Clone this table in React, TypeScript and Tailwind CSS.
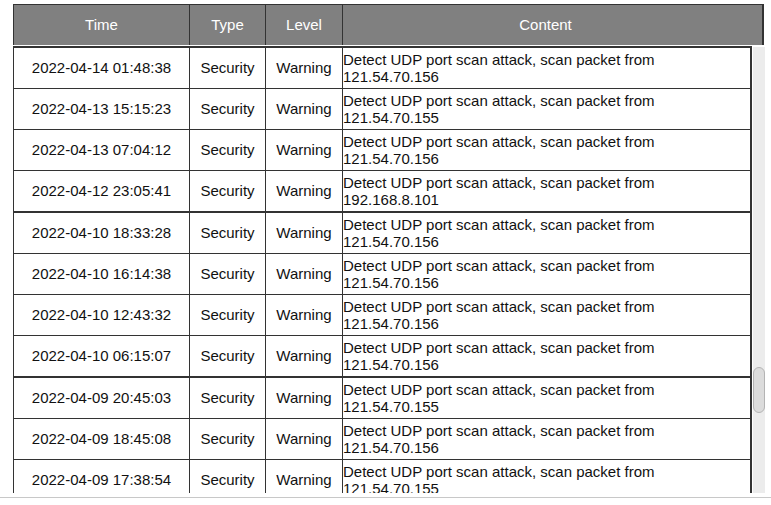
import React from 'react';

interface LogRow {
  time: string;
  type: string;
  level: string;
  content: string;
}

const rows: LogRow[] = [
  { time: '2022-04-14 01:48:38', type: 'Security', level: 'Warning', content: 'Detect UDP port scan attack, scan packet from 121.54.70.156' },
  { time: '2022-04-13 15:15:23', type: 'Security', level: 'Warning', content: 'Detect UDP port scan attack, scan packet from 121.54.70.155' },
  { time: '2022-04-13 07:04:12', type: 'Security', level: 'Warning', content: 'Detect UDP port scan attack, scan packet from 121.54.70.156' },
  { time: '2022-04-12 23:05:41', type: 'Security', level: 'Warning', content: 'Detect UDP port scan attack, scan packet from 192.168.8.101' },
  { time: '2022-04-10 18:33:28', type: 'Security', level: 'Warning', content: 'Detect UDP port scan attack, scan packet from 121.54.70.156' },
  { time: '2022-04-10 16:14:38', type: 'Security', level: 'Warning', content: 'Detect UDP port scan attack, scan packet from 121.54.70.156' },
  { time: '2022-04-10 12:43:32', type: 'Security', level: 'Warning', content: 'Detect UDP port scan attack, scan packet from 121.54.70.156' },
  { time: '2022-04-10 06:15:07', type: 'Security', level: 'Warning', content: 'Detect UDP port scan attack, scan packet from 121.54.70.156' },
  { time: '2022-04-09 20:45:03', type: 'Security', level: 'Warning', content: 'Detect UDP port scan attack, scan packet from 121.54.70.155' },
  { time: '2022-04-09 18:45:08', type: 'Security', level: 'Warning', content: 'Detect UDP port scan attack, scan packet from 121.54.70.156' },
  { time: '2022-04-09 17:38:54', type: 'Security', level: 'Warning', content: 'Detect UDP port scan attack, scan packet from 121.54.70.155' },
];

const App: React.FC = () => {
  return (
    <div className="w-[771px] h-[505px] bg-white overflow-hidden font-['Liberation_Sans',Arial,sans-serif] text-[15px] text-[#111]">
      <div className="pt-[4px] pl-[13px]">
        {/* header */}
        <div className="flex w-[751px] h-[41px] bg-[#808080] border-t border-l border-r-2 border-[#333] text-white">
          <div className="w-[176px] shrink-0 border-r border-[#333] flex items-center justify-center">Time</div>
          <div className="w-[76px] shrink-0 border-r border-[#333] flex items-center justify-center">Type</div>
          <div className="w-[77px] shrink-0 border-r border-[#333] flex items-center justify-center">Level</div>
          <div className="flex-1 flex items-center justify-center pr-[14px]">Content</div>
        </div>

        {/* body */}
        <div className="flex mt-[1px] h-[447px]">
          <div className="w-[739px] border-t-2 border-l border-r-2 border-[#333] overflow-hidden">
            {rows.map((row, i) => (
              <div
                key={i}
                className={`flex border-[#333] ${i === 3 || i === 7 ? 'border-b-2 h-[42px]' : 'border-b h-[41px]'}`}
              >
                <div className="w-[176px] shrink-0 border-r border-[#333] flex items-center justify-center">
                  {row.time}
                </div>
                <div className="w-[76px] shrink-0 border-r border-[#333] flex items-center justify-center">
                  {row.type}
                </div>
                <div className="w-[77px] shrink-0 border-r border-[#333] flex items-center justify-center">
                  {row.level}
                </div>
                <div className="flex-1 flex items-center leading-[17px]">
                  {row.content}
                </div>
              </div>
            ))}
          </div>

          {/* scrollbar */}
          <div className="relative w-[12px] ml-[1px] mt-[1px] bg-[#ececec]">
            <div className="absolute left-0 right-0 top-[320px] h-[46px] rounded-full border border-[#b4b4b4] bg-[#dcdcdc]" />
          </div>
        </div>
      </div>
      <div className="mt-[4px] h-px bg-[#c8c8c8]" />
    </div>
  );
};

export default App;
